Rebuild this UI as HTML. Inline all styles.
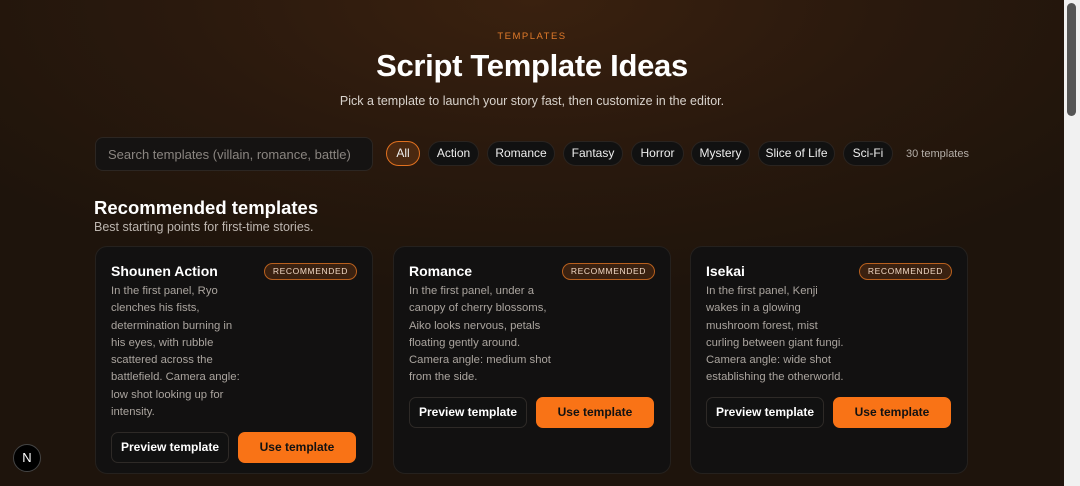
<!DOCTYPE html>
<html><head><meta charset="utf-8"><style>
*{box-sizing:border-box;margin:0;padding:0}
body{width:1080px;height:486px;overflow:hidden;font-family:"Liberation Sans",sans-serif;background:#1f140c;position:relative;color:#fff}
.bg{position:absolute;left:0;top:0;width:1064px;height:486px;background:radial-gradient(ellipse 700px 300px at 532px 0px,#3a210f 0%,#2a190d 50%,#1e140c 100%)}
.sb{position:absolute;left:1064px;top:0;width:16px;height:486px;background:#f1f1f1}
.sb i{position:absolute;left:3px;top:3px;width:9px;height:113px;background:#555;border-radius:5px}
.abs{position:absolute;white-space:nowrap}
.eyebrow{left:0;width:1064px;top:31px;text-align:center;font-size:9.5px;letter-spacing:1.5px;color:#e07a2a}
h1{position:absolute;left:0;width:1064px;top:48px;text-align:center;font-size:31px;font-weight:bold;letter-spacing:-0.3px}
.sub{left:0;width:1064px;top:94px;text-align:center;font-size:12.5px;color:#d8d2cc}
.search{left:95px;top:137px;width:278px;height:34px;border:1px solid #2c2622;border-radius:8px;background:#151312;color:#8a8580;font-size:13px;padding:9px 12px}
.chip{position:absolute;top:141px;height:25px;border-radius:13px;background:#111;border:1px solid #2a2420;font-size:12px;color:#eee;text-align:center;line-height:23px}
.chip.on{background:#4a2810;border-color:#e0701f}
.count{left:906px;top:148px;font-size:11px;color:#b4aea8}
.h2{left:94px;top:197px;font-size:18.5px;font-weight:bold}
.h2s{left:94px;top:220px;font-size:12.5px;color:#bdb6b0}
.card{position:absolute;top:246px;width:278px;height:228px;background:#121111;border:1px solid #25211e;border-radius:12px}
.card .t{position:absolute;left:15px;top:16px;font-size:14px;font-weight:bold}
.badge{position:absolute;right:15px;top:16px;height:17px;border:1px solid #b8601e;background:#3a2110;border-radius:9px;font-size:8.5px;letter-spacing:.6px;color:#f0d8c4;padding:0 8px;line-height:15px}
.card p{position:absolute;left:15px;top:36px;font-size:11.3px;line-height:17.3px;color:#aaa49e;white-space:nowrap}
.btn{position:absolute;height:31px;width:118px;border-radius:7px;font-weight:bold;font-size:12px;text-align:center;line-height:29px}
.pv{left:15px;border:1px solid #2e2a27;background:#111;color:#fff}
.us{left:142px;background:#f97316;border:1px solid #f97316;color:#111}
.n{left:13px;top:444px;width:28px;height:28px;border-radius:50%;background:#000;border:1px solid #444;color:#fff;font-size:13px;text-align:center;line-height:26px}
</style></head><body>
<div class="bg"></div>
<div class="abs eyebrow">TEMPLATES</div>
<h1>Script Template Ideas</h1>
<div class="abs sub">Pick a template to launch your story fast, then customize in the editor.</div>
<div class="abs search">Search templates (villain, romance, battle)</div>
<div class="chip on" style="left:386px;width:34px">All</div>
<div class="chip" style="left:428px;width:51px">Action</div>
<div class="chip" style="left:487px;width:68px">Romance</div>
<div class="chip" style="left:563px;width:60px">Fantasy</div>
<div class="chip" style="left:631px;width:53px">Horror</div>
<div class="chip" style="left:691px;width:59px">Mystery</div>
<div class="chip" style="left:758px;width:77px">Slice of Life</div>
<div class="chip" style="left:843px;width:50px">Sci-Fi</div>
<div class="abs count">30 templates</div>
<div class="abs h2">Recommended templates</div>
<div class="abs h2s">Best starting points for first-time stories.</div>

<div class="card" style="left:95px">
<div class="t">Shounen Action</div><div class="badge">RECOMMENDED</div>
<p>In the first panel, Ryo<br>clenches his fists,<br>determination burning in<br>his eyes, with rubble<br>scattered across the<br>battlefield. Camera angle:<br>low shot looking up for<br>intensity.</p>
<div class="btn pv" style="top:185px">Preview template</div><div class="btn us" style="top:185px">Use template</div>
</div>
<div class="card" style="left:393px">
<div class="t">Romance</div><div class="badge">RECOMMENDED</div>
<p>In the first panel, under a<br>canopy of cherry blossoms,<br>Aiko looks nervous, petals<br>floating gently around.<br>Camera angle: medium shot<br>from the side.</p>
<div class="btn pv" style="top:150px">Preview template</div><div class="btn us" style="top:150px">Use template</div>
</div>
<div class="card" style="left:690px">
<div class="t">Isekai</div><div class="badge">RECOMMENDED</div>
<p>In the first panel, Kenji<br>wakes in a glowing<br>mushroom forest, mist<br>curling between giant fungi.<br>Camera angle: wide shot<br>establishing the otherworld.</p>
<div class="btn pv" style="top:150px">Preview template</div><div class="btn us" style="top:150px">Use template</div>
</div>
<div class="abs n">N</div>
<div class="sb"><i></i></div>
</body></html>
